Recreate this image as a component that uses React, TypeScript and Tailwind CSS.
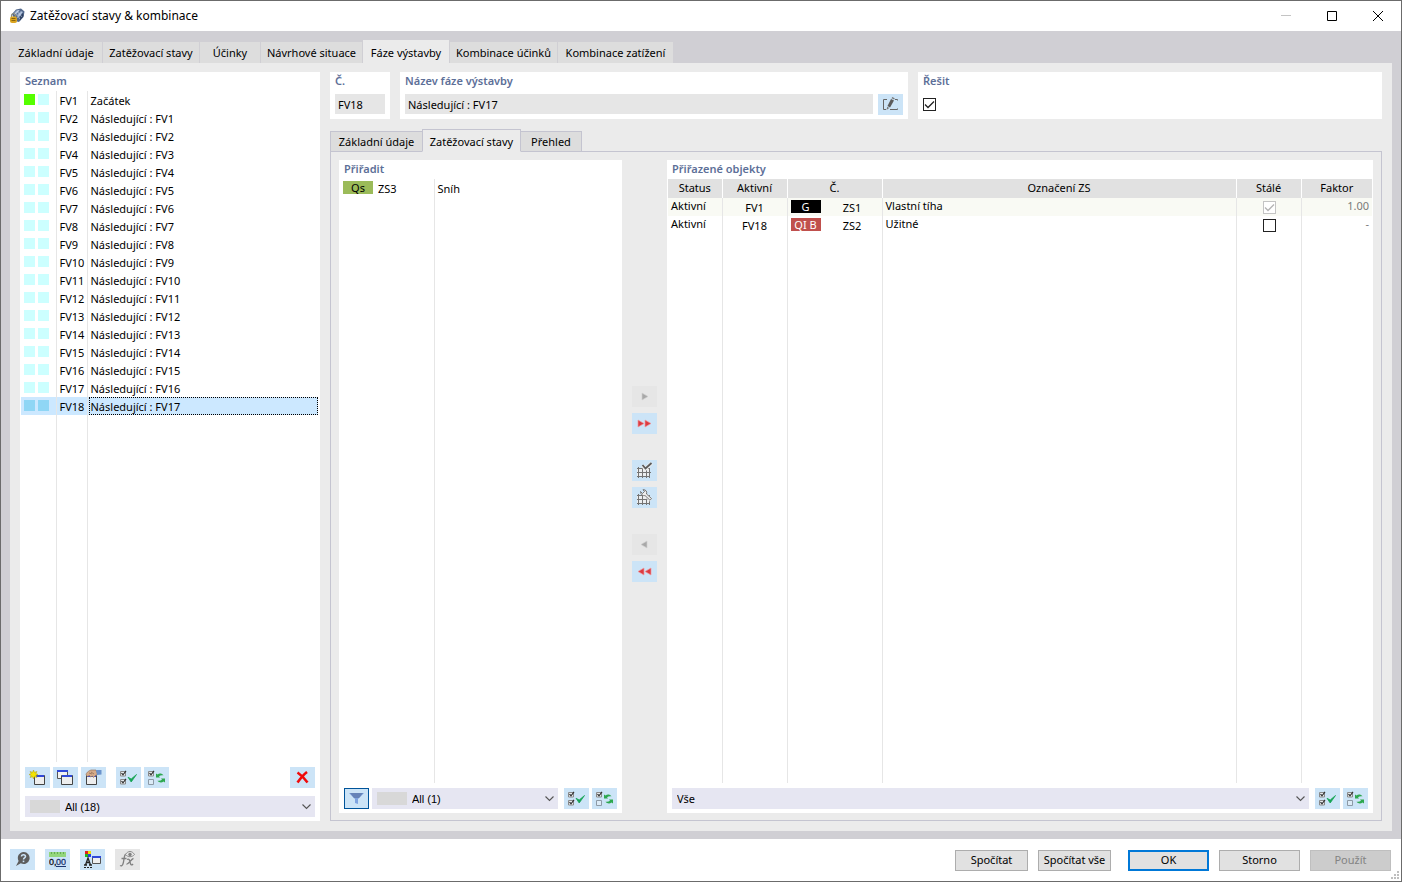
import { useState } from "react";
import type { ReactNode } from "react";
import clsx from "clsx";

const mainTabs = [
  { label: "Základní údaje", width: "w-[92px]" },
  { label: "Zatěžovací stavy", width: "w-[96px]" },
  { label: "Účinky", width: "w-[60px]" },
  { label: "Návrhové situace", width: "w-[101px]" },
  { label: "Fáze výstavby", width: "w-[86px]" },
  { label: "Kombinace účinků", width: "w-[107px]" },
  { label: "Kombinace zatížení", width: "w-[115px]" },
];

const innerTabs = [
  { label: "Základní údaje", width: "w-[92px]" },
  { label: "Zatěžovací stavy", width: "w-[99px]" },
  { label: "Přehled", width: "w-[61px]" },
];

const stages = Array.from({ length: 18 }, (_, i) => ({
  id: `FV${i + 1}`,
  name: i === 0 ? "Začátek" : `Následující : FV${i}`,
}));

const assigned = [
  { status: "Aktivní", active: "FV1", tag: "G", tagClass: "bg-black", id: "ZS1", name: "Vlastní tíha", permanent: true, factor: "1.00" },
  { status: "Aktivní", active: "FV18", tag: "QI B", tagClass: "bg-[#c0504d]", id: "ZS2", name: "Užitné", permanent: false, factor: "-" },
];

function IconButton({ label, disabled, framed, children }: { label: string; disabled?: boolean; framed?: boolean; children: ReactNode }) {
  return (
    <button
      type="button"
      aria-label={label}
      title={label}
      disabled={disabled}
      className={clsx(
        "flex h-[21px] w-[25px] shrink-0 items-center justify-center",
        disabled ? "bg-[#e6e6e6]" : "bg-[#cce4f7]",
        framed && "border border-[#00549a]"
      )}
    >
      {children}
    </button>
  );
}

function AppIcon() {
  return (
    <svg width="16" height="16" viewBox="0 0 16 16">
      <path d="M3 6 7 1.500 12 .5l3.500 3-1 5.500L10 14l-4-1z" fill="#52688c" />
      <path d="M4.500 5.500 8 2l3 .5-4 4zM8 7l4-4 2 1-4 5z" fill="#9db1cf" />
      <path d="M11 9l3-4 .5 3-3.500 4.500z" fill="#2f4161" />
      <path d="M8 3l5 6M6 5l5 6M10 2l-5 5M13 4l-5 6" stroke="#dbe4f2" strokeWidth=".5" />
      <path d="M2.500 9V7.500a2 2 0 0 1 4 0V9" fill="none" stroke="#8b8b7b" strokeWidth="1.200" />
      <rect x="1" y="8.500" width="7" height="6.500" rx="2" fill="#dba520" />
      <path d="M2.500 10.500h4M2.500 12.500h4" stroke="#8a640c" />
    </svg>
  );
}

function CheckAllIcon() {
  return (
    <svg width="17" height="15" viewBox="0 0 17 15" className="shrink-0">
      <path d="M.5 1.500h5v4.500h-5zM.5 9.500h5v4.500h-5z" fill="#f2f6fa" stroke="#8a8a8a" />
      <path d="M1.500 3 3 4.800 6 .8M1.500 11 3 12.800 6 8.800" fill="none" stroke="#333" strokeWidth="1.200" />
      <path d="M8 7.200 11.200 12 16.500 4.500 11.200 9z" fill="#17a555" stroke="#17a555" strokeWidth=".8" strokeLinejoin="round" />
    </svg>
  );
}

function InvertIcon() {
  return (
    <svg width="17" height="15" viewBox="0 0 17 15" className="shrink-0">
      <path d="M.5 1.500h5v4.500h-5z" fill="#f2f6fa" stroke="#8a8a8a" />
      <path d="M.5 9.500h5v5h-5z" fill="#dcebf7" stroke="#8d9aa6" />
      <path d="M1.500 3 3 4.800 6 .8" fill="none" stroke="#333" strokeWidth="1.200" />
      <path d="M8 3.500l1.500 1c2-1.500 4.500-1 6 .8-2-.3-3.300 0-4.500.9l1 1.300H8z" fill="#2da84f" />
      <path d="M17 12.500l-1.500-1c-2 1.500-4.500 1-6-.8 2 .3 3.300 0 4.500-.9l-1-1.300h4z" fill="#2da84f" />
    </svg>
  );
}

function WindowIcon({ kind }: { kind: "new" | "copy" | "take" }) {
  return (
    <svg width="17" height="17" viewBox="0 0 17 17" className="shrink-0">
      {kind === "copy" ? (
        <>
          <path d="M.5 1.500h10v8H.5z" fill="#f1f1f1" stroke="#555" />
          <path d="M0 1h11v2H0z" fill="#3048d8" />
          <path d="M4.500 6.500h11v9h-11z" fill="#eeeeee" stroke="#444" />
          <path d="M5 6h10v2H5z" fill="#3048d8" />
        </>
      ) : kind === "new" ? (
        <>
          <path d="M5.500 6.500h10v9h-10z" fill="#eeeeee" stroke="#444" />
          <path d="M6 6h9v2H6z" fill="#3048d8" />
          <path d="M4.500 1l.9 2.300L8 2.500 6.800 4.500 9 5.500 6.800 6.500 8 8.500 5.400 7.700 4.500 10l-.9-2.300L1 8.500l1.200-2L0 5.500l2.200-1L1 2.500l2.600.8z" fill="#f5e400" stroke="#a69b16" strokeWidth=".5" />
        </>
      ) : (
        <>
          <path d="M1.500 6.500h10v9h-10z" fill="#eeeeee" stroke="#444" />
          <path d="M2 6h9v2H2z" fill="#3048d8" />
          <path d="M1 6c0-2 2-4 5-5h5l1.500 4L10 7 8.500 8.500 7.500 7 5.500 8l-1-1.500-2 1z" fill="#d5ab8a" stroke="#8b6a50" strokeWidth=".6" />
          <path d="M4 4l3 1M6 3l3 2" stroke="#7c5b44" strokeWidth=".6" />
          <path d="M11 1h5.500v4.500l-4.500.5z" fill="#6b93cc" />
        </>
      )}
    </svg>
  );
}

function ArrowIcon({ double, left, gray }: { double?: boolean; left?: boolean; gray?: boolean }) {
  return (
    <svg width="15" height="9" viewBox="0 0 15 9" className={left ? "-scale-x-100" : undefined}>
      {double ? (
        <path d="M1 1l6 3.500L1 8zM8 1l6 3.500L8 8z" fill="#dd3b41" stroke="#ee9a9d" strokeWidth=".7" />
      ) : (
        <path d="M5 1l6 3.500L5 8z" fill={gray ? "#a8a8a8" : "#dd3b41"} stroke={gray ? "#cfcfcf" : "#ee9a9d"} strokeWidth=".7" />
      )}
    </svg>
  );
}

function GridIcon({ wrench }: { wrench?: boolean }) {
  return (
    <svg width="17" height="17" viewBox="0 0 17 17" className="shrink-0">
      <path d="M1 6h13v9H1z" fill="#eceef0" />
      <path d="M2.500 5v11M6.500 5v11M10.500 5v11M13.500 7v9M1 6.500h13M1 10.500h14M1 14.500h13" fill="none" stroke="#747474" />
      {wrench ? (
        <>
          <path d="M8 5l7 6" stroke="#f5f5f5" strokeWidth="4" />
          <path d="M4.500 2.500 6.500 4.500 8.500 2.500 7 .7c3-.2 4.300 2 3.500 4.300L15.500 9.500 14 11.300 9 6.500C7 7.200 4.500 5.500 4.500 2.500z" fill="#efefef" stroke="#666" strokeWidth=".9" />
        </>
      ) : (
        <>
          <path d="M6.500 3.500 9.500 7l6-6" fill="none" stroke="#eee" strokeWidth="3.500" />
          <path d="M6.500 3 9.500 6.500 15.500 1" fill="none" stroke="#5b5b5b" strokeWidth="1.800" />
        </>
      )}
    </svg>
  );
}

function EditIcon() {
  return (
    <svg width="17" height="15" viewBox="0 0 17 15">
      <path d="M5 2.500H1.500v10H4M13 2.500h2.500v1M8 12.500h7.500v-1" fill="none" stroke="#666" />
      <path d="M9 2 12 3.500 8 10.500 5.500 9z" fill="#5c5c5c" />
      <path d="M9.500 1.200 10.300 0l2.400 1.200-.5 1.300zM5.200 9.700l2 1.200L4.500 13z" fill="#777" />
    </svg>
  );
}

function DeleteIcon() {
  return (
    <svg width="13" height="13" viewBox="0 0 13 13">
      <path d="M1.500 1.500c3 2 7 6 10 10M11 1C7 4 4 8 1.500 11.500" fill="none" stroke="#f00b0b" strokeWidth="2.600" />
    </svg>
  );
}

function FilterIcon() {
  return (
    <svg width="15" height="13" viewBox="0 0 15 13">
      <path d="M0 1h15L9 7v5l-3-1V7z" fill="#7fa3e0" />
      <path d="M1 1h13L10 6H5z" fill="#6683b8" />
    </svg>
  );
}

function HelpIcon() {
  return (
    <svg width="15" height="15" viewBox="0 0 15 15">
      <path d="M8.500 0a6 6 0 1 1-2.700 11.300L1 14l2.600-5A6 6 0 0 1 8.500 0z" fill="#5d5d5d" />
      <path d="M6.500 4.500c0-2.500 4-2.300 4 0 0 1.500-2 1.300-2 3" fill="none" stroke="#cce4f7" strokeWidth="1.500" />
      <path d="M7.700 8.600h1.600v1.600H7.700z" fill="#cce4f7" />
    </svg>
  );
}

function UnitsIcon() {
  return (
    <svg width="17" height="17" viewBox="0 0 17 17" className="shrink-0">
      <path d="M0 1h17v5H0z" fill="#93d67c" />
      <path d="M2.500 1v2M5.500 1v2M8.500 1v2M11.500 1v2M14.500 1v2" stroke="#65ad52" />
      <text x="0" y="14" fontSize="9" fontFamily="Liberation Sans, sans-serif" fill="#111" stroke="#111" strokeWidth=".3">0,</text>
      <text x="7" y="14" fontSize="9" fontFamily="Liberation Sans, sans-serif" fill="#1d3570" stroke="#1d3570" strokeWidth=".3">00</text>
      <path d="M7 15.500h10" stroke="#1d3570" />
    </svg>
  );
}

function DisplayIcon() {
  return (
    <svg width="17" height="17" viewBox="0 0 17 17" className="shrink-0">
      <path d="M1 0h3v3H1z" fill="#e31e1e" />
      <path d="M4 0h3v3H4z" fill="#f0e000" />
      <path d="M1 3h3v3H1z" fill="#1fb51f" />
      <path d="M4 3h3v3H4z" fill="#2940e0" />
      <path d="M1.500 14 4 7l2.500 7M2.500 11.500h3M0 14h3M5 14h3" fill="none" stroke="#222" strokeWidth="1.300" />
      <path d="M0 16.500h9" stroke="#222" strokeDasharray="2 1" />
      <path d="M8.500 5.500h8v7h-8z" fill="#eee" stroke="#555" />
      <path d="M8 5h9v2H8z" fill="#3048d8" />
    </svg>
  );
}

function FormulaIcon() {
  return (
    <svg width="17" height="17" viewBox="0 0 17 17" className="shrink-0">
      <path d="M8 4C6 2.500 5.500 4.500 5 8s-1 8-4 6.500M2.500 7.500h5M8 8.500c2-1 2.500 0 3 2.500s1.500 4 3 2M14.500 7.500c-2 0-5 6-7 5.500" fill="none" stroke="#808080" strokeWidth="1.300" />
      <path d="M6.500 3.500c2.500-4 6.500-4 9 0-2.500 3-6.500 3-9 0z" fill="#e6e6e6" stroke="#8a8a8a" />
      <circle cx="11" cy="3.500" r="1.700" fill="#808080" />
    </svg>
  );
}

function Combo({ label, value, swatch }: { label: string; value: string; swatch?: boolean }) {
  return (
    <div className="relative min-w-0 flex-1">
      <select
        aria-label={label}
        className={clsx("block h-[21px] w-full appearance-none bg-[#e6e6f2] pt-px outline-none", swatch ? "pl-10 font-['Liberation_Sans',sans-serif]" : "pl-[5px]")}
      >
        <option>{value}</option>
      </select>
      {swatch && <span className="pointer-events-none absolute top-1 left-[5px] h-[13px] w-[30px] bg-[#d8d8d8]" />}
      <svg width="9" height="6" viewBox="0 0 9 6" className="pointer-events-none absolute top-2 right-1">
        <path d="M.5.5l4 4 4-4" fill="none" stroke="#555" strokeWidth="1.100" />
      </svg>
    </div>
  );
}

function CheckBox({ label, defaultChecked, disabled }: { label: string; defaultChecked?: boolean; disabled?: boolean }) {
  return (
    <span className="relative block size-[13px]">
      <input
        type="checkbox"
        aria-label={label}
        defaultChecked={defaultChecked}
        disabled={disabled}
        className="peer block size-[13px] appearance-none border border-[#222] bg-white disabled:border-[#c4c4c4]"
      />
      <svg viewBox="0 0 13 13" className="pointer-events-none absolute inset-0 hidden size-[13px] text-[#222] peer-checked:block peer-disabled:text-[#b4b4b4]">
        <path d="M2 6.500 5 9.500l6-6" fill="none" stroke="currentColor" strokeWidth="1.300" />
      </svg>
    </span>
  );
}

function Heading({ children }: { children: ReactNode }) {
  return <h2 className="h-[19px] px-[5px] leading-[18px] font-semibold text-[#5d6f98]">{children}</h2>;
}

function TitleBar() {
  return (
    <header className="flex h-[30px] shrink-0 items-center bg-white pl-2">
      <AppIcon />
      <h1 className="flex-1 pl-[5px] text-xs">Zatěžovací stavy &amp; kombinace</h1>
      <button type="button" aria-label="Minimalizovat" disabled className="flex h-full w-[46px] items-center justify-center">
        <svg width="10" height="10" viewBox="0 0 10 10"><path d="M0 4.500h10" stroke="#c4c4c4" /></svg>
      </button>
      <button type="button" aria-label="Maximalizovat" className="flex h-full w-[46px] items-center justify-center">
        <svg width="10" height="10" viewBox="0 0 10 10"><path d="M.5.5h9v9h-9z" fill="none" stroke="#000" /></svg>
      </button>
      <button type="button" aria-label="Zavřít" className="flex h-full w-[46px] items-center justify-center">
        <svg width="10" height="10" viewBox="0 0 10 10"><path d="M0 0l10 10M10 0L0 10" stroke="#000" /></svg>
      </button>
    </header>
  );
}

function StageList() {
  const [selected, setSelected] = useState("FV18");

  return (
    <section className="flex w-[300px] shrink-0 flex-col bg-white pb-1">
      <Heading>Seznam</Heading>
      <div className="grid flex-1 pr-0.5 pl-px">
        <table className="w-full table-fixed border-collapse">
          <colgroup>
            <col className="w-[35px]" />
            <col className="w-[31px]" />
            <col />
          </colgroup>
          <tbody>
            {stages.map((s, i) => (
              <tr key={s.id} onClick={() => setSelected(s.id)} className={clsx("h-[18px]", s.id === selected && "bg-[#cce8ff]")}>
                <td className="border-r border-[#e6e6e6] p-0 align-top">
                  <div className="flex gap-[3px] pt-[3px] pl-[3px]">
                    <span className={clsx("size-[11px]", s.id === selected ? "bg-[#8fd6f5]" : i === 0 ? "bg-[#55ff00]" : "bg-[#ccffff]")} />
                    <span className={clsx("size-[11px]", s.id === selected ? "bg-[#8fd6f5]" : "bg-[#ccffff]")} />
                  </div>
                </td>
                <td className="border-r border-[#e6e6e6] p-0 pl-[3px] align-top leading-[19px]">
                  <div className="h-[18px]">{s.id}</div>
                </td>
                <td className="p-0 pl-px">
                  <div className={clsx("h-[18px] border pl-px leading-[17px]", s.id === selected ? "border-dotted border-black" : "border-transparent")}>
                    {s.name}
                  </div>
                </td>
              </tr>
            ))}
            <tr>
              <td className="border-r border-[#e6e6e6]" />
              <td className="border-r border-[#e6e6e6]" />
              <td />
            </tr>
          </tbody>
        </table>
      </div>
      <div className="flex gap-[3px] px-[5px] pt-[5px] pb-2">
        <IconButton label="Nová"><WindowIcon kind="new" /></IconButton>
        <IconButton label="Kopírovat"><WindowIcon kind="copy" /></IconButton>
        <IconButton label="Převzít"><WindowIcon kind="take" /></IconButton>
        <div className="ml-[7px] flex gap-[3px]">
          <IconButton label="Vybrat vše"><CheckAllIcon /></IconButton>
          <IconButton label="Invertovat výběr"><InvertIcon /></IconButton>
        </div>
        <div className="ml-auto">
          <IconButton label="Smazat"><DeleteIcon /></IconButton>
        </div>
      </div>
      <div className="flex px-[5px]">
        <Combo label="Filtr seznamu" value="All (18)" swatch />
      </div>
    </section>
  );
}

function StageHeader() {
  return (
    <div className="flex gap-2.5">
      <section className="h-[47px] w-[60px] shrink-0 bg-white">
        <Heading>
          <label htmlFor="stage-no">Č.</label>
        </Heading>
        <div className="px-[5px] pt-[3px]">
          <input id="stage-no" readOnly value="FV18" className="block h-5 w-full bg-[#e6e6e6] px-[3px] outline-none" />
        </div>
      </section>
      <section className="h-[47px] min-w-0 flex-[508] bg-white">
        <Heading>
          <label htmlFor="stage-name">Název fáze výstavby</label>
        </Heading>
        <div className="flex gap-[5px] px-[5px] pt-[3px]">
          <input id="stage-name" readOnly value="Následující : FV17" className="block h-5 min-w-0 flex-1 bg-[#e6e6e6] px-[3px] outline-none" />
          <IconButton label="Upravit název"><EditIcon /></IconButton>
        </div>
      </section>
      <section className="h-[47px] min-w-0 flex-[464] bg-white">
        <Heading>Řešit</Heading>
        <div className="px-[5px] pt-[7px]">
          <CheckBox label="Řešit" defaultChecked />
        </div>
      </section>
    </div>
  );
}

function AssignList() {
  return (
    <section className="flex min-w-0 flex-[283] flex-col bg-white pb-1">
      <Heading>Přiřadit</Heading>
      <div className="grid flex-1">
        <table className="w-full table-fixed border-collapse">
          <colgroup>
            <col className="w-[95px]" />
            <col />
          </colgroup>
          <tbody>
            <tr className="h-[18px]">
              <td className="border-r border-[#e6e6e6] p-0 align-top">
                <div className="flex items-start gap-[5px] pl-1">
                  <span className="mt-0.5 h-[13px] w-[30px] bg-[#9bbb59] text-center leading-[13px]">Qs</span>
                  <span className="h-[18px] leading-[19px]">ZS3</span>
                </div>
              </td>
              <td className="p-0 pl-[3px] align-top leading-[19px]">
                <div className="h-[18px]">Sníh</div>
              </td>
            </tr>
            <tr>
              <td className="border-r border-[#e6e6e6]" />
              <td />
            </tr>
          </tbody>
        </table>
      </div>
      <div className="flex gap-[3px] px-[5px] pt-[5px]">
        <IconButton label="Filtr" framed><FilterIcon /></IconButton>
        <Combo label="Filtr zatěžovacích stavů" value="All (1)" swatch />
        <div className="ml-[3px] flex gap-[3px]">
          <IconButton label="Vybrat vše"><CheckAllIcon /></IconButton>
          <IconButton label="Invertovat výběr"><InvertIcon /></IconButton>
        </div>
      </div>
    </section>
  );
}

function MoveButtons() {
  return (
    <div className="flex w-[45px] shrink-0 flex-col items-center justify-center gap-[26px] pb-[5px]">
      <div className="flex flex-col gap-1.5">
        <IconButton label="Přiřadit vybrané" disabled><ArrowIcon gray /></IconButton>
        <IconButton label="Přiřadit vše"><ArrowIcon double /></IconButton>
      </div>
      <div className="flex flex-col gap-1.5">
        <IconButton label="Vybrat v tabulce"><GridIcon /></IconButton>
        <IconButton label="Nastavení tabulky"><GridIcon wrench /></IconButton>
      </div>
      <div className="flex flex-col gap-1.5">
        <IconButton label="Odebrat vybrané" disabled><ArrowIcon left gray /></IconButton>
        <IconButton label="Odebrat vše"><ArrowIcon left double /></IconButton>
      </div>
    </div>
  );
}

function AssignedTable() {
  return (
    <section className="flex min-w-0 flex-[706] flex-col bg-white pb-1">
      <Heading>Přiřazené objekty</Heading>
      <div className="grid flex-1 px-px">
        <table className="w-full table-fixed border-collapse">
          <colgroup>
            <col className="w-[54px]" />
            <col className="w-[65px]" />
            <col className="w-[95px]" />
            <col />
            <col className="w-[65px]" />
            <col className="w-[71px]" />
          </colgroup>
          <thead>
            <tr className="h-[19px] bg-[#e1e1e1]">
              {["Status", "Aktivní", "Č.", "Označení ZS", "Stálé", "Faktor"].map((h) => (
                <th key={h} scope="col" className="border-r border-white p-0 align-top leading-[18px] font-normal last:border-r-0">
                  {h}
                </th>
              ))}
            </tr>
          </thead>
          <tbody>
            {assigned.map((r) => (
              <tr key={r.id} className="h-[18px] odd:bg-[#f9faf4]">
                <td className="border-r border-[#e6e6e6] p-0 pl-[3px] align-top leading-4">{r.status}</td>
                <td className="border-r border-[#e6e6e6] p-0 text-center align-top leading-[19px]">
                  <div className="h-[18px]">{r.active}</div>
                </td>
                <td className="border-r border-[#e6e6e6] p-0 align-top">
                  <div className="flex items-start pl-[3px]">
                    <span className={clsx("mt-0.5 h-[13px] w-[30px] text-center leading-[13px] text-white", r.tagClass)}>{r.tag}</span>
                    <span className="h-[18px] flex-1 pl-0.5 text-center leading-[19px]">{r.id}</span>
                  </div>
                </td>
                <td className="border-r border-[#e6e6e6] p-0 pl-[3px] align-top leading-4">{r.name}</td>
                <td className="border-r border-[#e6e6e6] p-0">
                  <div className="flex justify-center pl-px">
                    <CheckBox label={`Stálé ${r.id}`} defaultChecked={r.permanent} disabled={r.permanent} />
                  </div>
                </td>
                <td className="p-0 pr-[3px] text-right align-top leading-4 text-[#7a7a7a]">{r.factor}</td>
              </tr>
            ))}
            <tr>
              <td className="border-r border-[#e6e6e6]" />
              <td className="border-r border-[#e6e6e6]" />
              <td className="border-r border-[#e6e6e6]" />
              <td className="border-r border-[#e6e6e6]" />
              <td className="border-r border-[#e6e6e6]" />
              <td />
            </tr>
          </tbody>
        </table>
      </div>
      <div className="flex gap-[3px] px-[5px] pt-[5px]">
        <Combo label="Filtr objektů" value="Vše" />
        <div className="ml-[3px] flex gap-[3px]">
          <IconButton label="Vybrat vše"><CheckAllIcon /></IconButton>
          <IconButton label="Invertovat výběr"><InvertIcon /></IconButton>
        </div>
      </div>
    </section>
  );
}

function Footer() {
  const button = "h-[21px] border border-[#adadad] bg-[#e1e1e1] whitespace-nowrap";

  return (
    <footer className="flex h-[42px] shrink-0 items-start justify-between bg-white pt-2.5 pr-2.5 pl-[9px]">
      <div className="flex gap-2.5">
        <IconButton label="Nápověda"><HelpIcon /></IconButton>
        <IconButton label="Jednotky"><UnitsIcon /></IconButton>
        <IconButton label="Zobrazení"><DisplayIcon /></IconButton>
        <IconButton label="Vzorec" disabled><FormulaIcon /></IconButton>
      </div>
      <div className="flex gap-2.5 pt-px">
        <button type="button" className={clsx(button, "w-[73px]")}>Spočítat</button>
        <button type="button" className={clsx(button, "w-[73px]")}>Spočítat vše</button>
        <button type="button" className="ml-[7px] h-[21px] w-[81px] border-2 border-[#0078d7] bg-[#e1e1e1]">OK</button>
        <button type="button" className={clsx(button, "w-[81px]")}>Storno</button>
        <button type="button" disabled className="h-[21px] w-[81px] border border-[#bfbfbf] bg-[#cccccc] text-[#838383]">Použít</button>
      </div>
      <svg width="8" height="8" viewBox="0 0 8 8" className="absolute right-0.5 bottom-0.5">
        <path d="M6 0h2v2H6zM3 3h2v2H3zM6 3h2v2H6zM0 6h2v2H0zM3 6h2v2H3zM6 6h2v2H6z" fill="#bfbfbf" />
      </svg>
    </footer>
  );
}

export default function App() {
  const [tab, setTab] = useState(4);
  const [innerTab, setInnerTab] = useState(1);

  return (
    <div className="relative flex min-h-screen flex-col border border-[#6b6b6b] bg-[#d0cfd4] font-['Noto_Sans',sans-serif] text-[11px] text-black">
      <TitleBar />
      <nav className="flex h-8 shrink-0 items-end gap-px px-[9px]">
        {mainTabs.map((t, i) => (
          <button
            key={t.label}
            type="button"
            onClick={() => setTab(i)}
            className={clsx("shrink-0 whitespace-nowrap", t.width, i === tab ? "h-[23px] bg-[#ebebeb] pt-1" : "h-[21px] bg-[#dddddd] pt-0.5")}
          >
            {t.label}
          </button>
        ))}
      </nav>
      <main className="mx-[9px] mb-2 flex flex-1 gap-2.5 bg-[#ebebeb] px-2.5 pt-[9px] pb-2.5">
        <StageList />
        <div className="flex min-w-0 flex-1 flex-col">
          <StageHeader />
          <nav className="z-10 mt-2.5 -mb-px flex h-[23px] items-end">
            {innerTabs.map((t, i) => (
              <button
                key={t.label}
                type="button"
                onClick={() => setInnerTab(i)}
                className={clsx(
                  "shrink-0 border border-[#c4c4d0] whitespace-nowrap",
                  t.width,
                  i === innerTab ? "h-[23px] border-b-[#ebebeb] bg-[#ebebeb] pt-1" : "h-[21px] bg-[#dddddd] pt-0.5",
                  i > innerTab && "border-l-0",
                  i < innerTab && "border-r-0"
                )}
              >
                {t.label}
              </button>
            ))}
          </nav>
          <div className="flex flex-1 border border-[#c4c4d0] px-2 pt-2 pb-[7px]">
            <AssignList />
            <MoveButtons />
            <AssignedTable />
          </div>
        </div>
      </main>
      <Footer />
    </div>
  );
}
